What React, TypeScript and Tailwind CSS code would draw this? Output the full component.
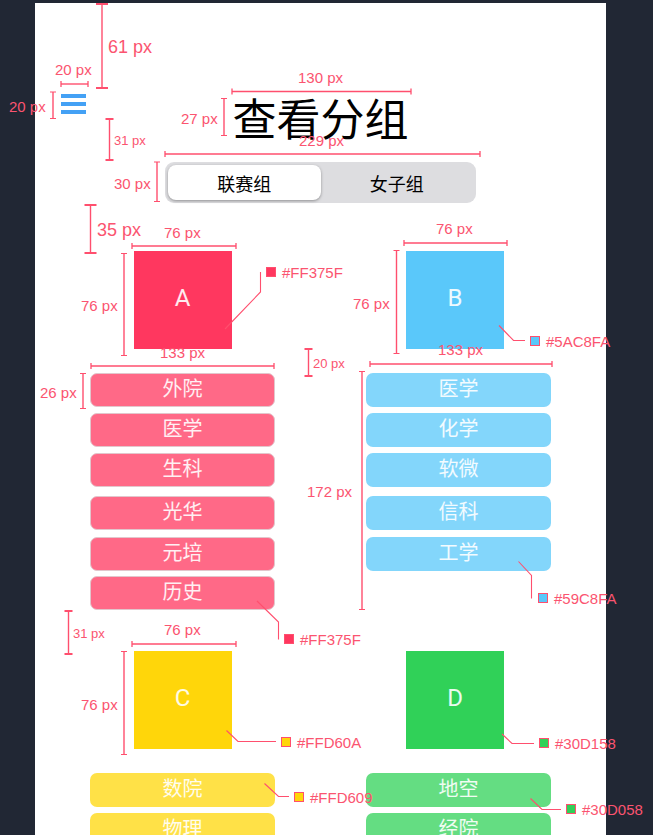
import { useState } from "react";

type Tone = {
  tile: string;
  chip: string;
};

type Group = {
  name: string;
  tone: Tone;
  teams: string[];
  inset: string;
};

const red: Tone = { tile: "bg-[#ff375f]", chip: "bg-[#ff6987] border border-[#e2c6cc]" };
const blue: Tone = { tile: "bg-[#5ac8fa]", chip: "bg-[#83d6fb]" };
const yellow: Tone = { tile: "bg-[#ffd60a]", chip: "bg-[#ffe147]" };
const green: Tone = { tile: "bg-[#30d158]", chip: "bg-[#64dd82]" };

const groups: Group[] = [
  { name: "A", tone: red, teams: ["外院", "医学", "生科", "光华", "元培", "历史"], inset: "" },
  { name: "B", tone: blue, teams: ["医学", "化学", "软微", "信科", "工学"], inset: "pr-[7px]" },
  { name: "C", tone: yellow, teams: ["数院", "物理"], inset: "" },
  { name: "D", tone: green, teams: ["地空", "经院"], inset: "pr-[7px]" },
];

const rowSpacing = ["", "mt-[6px]", "mt-[6px]", "mt-[9px]", "mt-[7px]", "mt-[5px]"];

function GroupColumn({ group }: { group: Group }) {
  return (
    <section className="flex flex-col">
      <div className={`flex justify-center ${group.inset}`}>
        <h2 className={`flex size-[98px] items-center justify-center pb-1 font-[Roboto,sans-serif] text-2xl font-normal text-white/90 ${group.tone.tile}`}>
          {group.name}
        </h2>
      </div>
      <ul className="mt-6 flex flex-col">
        {group.teams.map((team, i) => (
          <li key={team} className={rowSpacing[i]}>
            <button
              type="button"
              className={`flex h-[34px] w-full items-center justify-center rounded-[7px] pb-1 text-xl leading-6 text-white/90 ${group.tone.chip}`}
            >
              {team}
            </button>
          </li>
        ))}
      </ul>
    </section>
  );
}

const tabs = ["联赛组", "女子组"];

function Segmented() {
  const [active, setActive] = useState(0);
  return (
    <div role="tablist" className="mx-auto mt-[21px] flex h-[41px] w-[311px] rounded-[9px] bg-[#dddde0] p-[3px]">
      {tabs.map((tab, i) => (
        <button
          key={tab}
          type="button"
          role="tab"
          aria-selected={i === active}
          onClick={() => setActive(i)}
          className={
            i === active
              ? "flex-1 rounded-[8px] bg-white text-lg leading-6 text-black shadow-[0_1px_3px_rgba(0,0,0,0.35)]"
              : "flex-1 rounded-[8px] text-lg leading-6 text-black"
          }
        >
          {tab}
        </button>
      ))}
    </div>
  );
}

type Note = { text: string; at: string; size?: string };

const normal = "text-[15px]";
const wide = "text-[18px]";
const narrow = "text-[13px]";

const notes: Note[] = [
  { text: "61 px", at: "left-[108px] top-[37px]", size: wide },
  { text: "20 px", at: "left-[55px] top-[60px]" },
  { text: "20 px", at: "left-[9px] top-[97px]" },
  { text: "31 px", at: "left-[114px] top-[131px]", size: narrow },
  { text: "130 px", at: "left-[298px] top-[68px]" },
  { text: "27 px", at: "left-[181px] top-[109px]" },
  { text: "229 px", at: "left-[299px] top-[131px]" },
  { text: "30 px", at: "left-[114px] top-[174px]" },
  { text: "35 px", at: "left-[97px] top-[220px]", size: wide },
  { text: "76 px", at: "left-[164px] top-[223px]" },
  { text: "76 px", at: "left-[81px] top-[296px]" },
  { text: "133 px", at: "left-[160px] top-[343px]" },
  { text: "26 px", at: "left-[40px] top-[383px]" },
  { text: "20 px", at: "left-[313px] top-[354px]", size: narrow },
  { text: "76 px", at: "left-[436px] top-[219px]" },
  { text: "76 px", at: "left-[353px] top-[294px]" },
  { text: "133 px", at: "left-[438px] top-[340px]" },
  { text: "172 px", at: "left-[307px] top-[482px]" },
  { text: "31 px", at: "left-[73px] top-[624px]", size: narrow },
  { text: "76 px", at: "left-[164px] top-[620px]" },
  { text: "76 px", at: "left-[81px] top-[695px]" },
];

const swatches = [
  { text: "#FF375F", at: "left-[266px] top-[263px]", fill: "bg-[#ff375f]" },
  { text: "#5AC8FA", at: "left-[530px] top-[332px]", fill: "bg-[#5ac8fa]" },
  { text: "#59C8FA", at: "left-[538px] top-[589px]", fill: "bg-[#59c8fa]" },
  { text: "#FF375F", at: "left-[284px] top-[630px]", fill: "bg-[#ff375f]" },
  { text: "#FFD60A", at: "left-[281px] top-[733px]", fill: "bg-[#ffd60a]" },
  { text: "#FFD609", at: "left-[294px] top-[788px]", fill: "bg-[#ffd609]" },
  { text: "#30D158", at: "left-[539px] top-[734px]", fill: "bg-[#30d158]" },
  { text: "#30D058", at: "left-[566px] top-[800px]", fill: "bg-[#30d058]" },
];

// Horizontal spans: [y, x1, x2]
const spansX = [
  [84, 61, 88],
  [91.5, 232, 411],
  [154, 165, 480],
  [246, 132, 236],
  [366, 91, 274],
  [243, 404, 507],
  [364, 370, 552],
  [644, 132, 236],
];

// Vertical spans: [x, y1, y2]
const spansY = [
  [53, 92, 118.5],
  [224, 98.5, 135.5],
  [157, 162, 201.5],
  [124, 253.5, 355.5],
  [83, 373.5, 408.5],
  [396.5, 250.5, 353.5],
  [362, 371.5, 609.5],
  [124, 651.5, 754.5],
];

// Spacing brackets with heavy caps: [x, y1, y2, half cap width]
const brackets = [
  [102, 4, 88, 6],
  [109.5, 119, 160, 4],
  [90.5, 205, 253, 6],
  [308.5, 349, 376, 4],
  [68.5, 611, 654, 4],
];

const leaders = [
  "225,329 260.5,292 260.5,272",
  "499,325.5 513.5,340.5 525,340.5",
  "518.5,561.5 531.5,575.5 531.5,598.5",
  "257,601 278.5,622 278.5,639.5",
  "226.5,730.5 238,741.5 276,741.5",
  "264.5,783.5 278.5,796.5 289,796.5",
  "502,734 512,743.5 534,743.5",
  "530.5,798.5 542,809.5 561,809.5",
];

function Annotations() {
  return (
    <div className="pointer-events-none absolute inset-0 font-['Liberation_Sans',Arial,sans-serif] text-[#fb5470]">
      <svg className="absolute inset-0 size-full" fill="none" stroke="#ff4f6e" aria-hidden="true">
        {spansX.map(([y, a, b]) => (
          <g key={`${y}-${a}`}>
            <path d={`M${a} ${y}H${b}`} strokeWidth="1.4" />
            <path d={`M${a} ${y - 3}V${y + 3}M${b} ${y - 3}V${y + 3}`} strokeWidth="1.3" />
          </g>
        ))}
        {spansY.map(([x, a, b]) => (
          <g key={`${x}-${a}`}>
            <path d={`M${x} ${a}V${b}`} strokeWidth="1.4" />
            <path d={`M${x - 3} ${a}H${x + 3}M${x - 3} ${b}H${x + 3}`} strokeWidth="1.2" />
          </g>
        ))}
        {brackets.map(([x, a, b, r]) => (
          <g key={`${x}-${a}`}>
            <path d={`M${x} ${a}V${b}`} strokeWidth="1.4" />
            <path d={`M${x - r} ${a}H${x + r}M${x - r} ${b}H${x + r}`} strokeWidth="2" />
          </g>
        ))}
        {leaders.map((points) => (
          <polyline key={points} points={points} strokeWidth="1.1" />
        ))}
      </svg>
      {notes.map((note) => (
        <span key={note.at} className={`absolute leading-5 whitespace-nowrap ${note.at} ${note.size ?? normal}`}>
          {note.text}
        </span>
      ))}
      {swatches.map((swatch) => (
        <span key={swatch.at} className={`absolute flex items-center gap-[6px] text-[15px] leading-5 whitespace-nowrap ${swatch.at}`}>
          <i className={`mb-[2px] size-[10px] border border-[#ff4f6e] ${swatch.fill}`} />
          {swatch.text}
        </span>
      ))}
    </div>
  );
}

export default function App() {
  return (
    <div className="relative h-screen overflow-hidden bg-[#212734] pt-[3px] pr-[47px] pl-[35px] font-['Noto_Sans_CJK_SC',sans-serif]">
      <main className="min-h-full bg-white">
        <header className="grid grid-cols-[1fr_auto_1fr] items-start pt-[90px]">
          <button type="button" aria-label="菜单" className="ml-[26px] flex w-[25px] flex-col gap-1 pt-px">
            <i className="h-1 w-full bg-[#44a1f5]" />
            <i className="h-1 w-full bg-[#44a1f5]" />
            <i className="h-1 w-full bg-[#44a1f5]" />
          </button>
          <h1 className="text-[44px] leading-[48px] font-normal text-black">查看分组</h1>
        </header>
        <Segmented />
        <div className="mt-12 grid grid-cols-[185px_185px] justify-center gap-x-[91px] gap-y-[41px]">
          {groups.map((group) => (
            <GroupColumn key={group.name} group={group} />
          ))}
        </div>
      </main>
      <Annotations />
    </div>
  );
}
